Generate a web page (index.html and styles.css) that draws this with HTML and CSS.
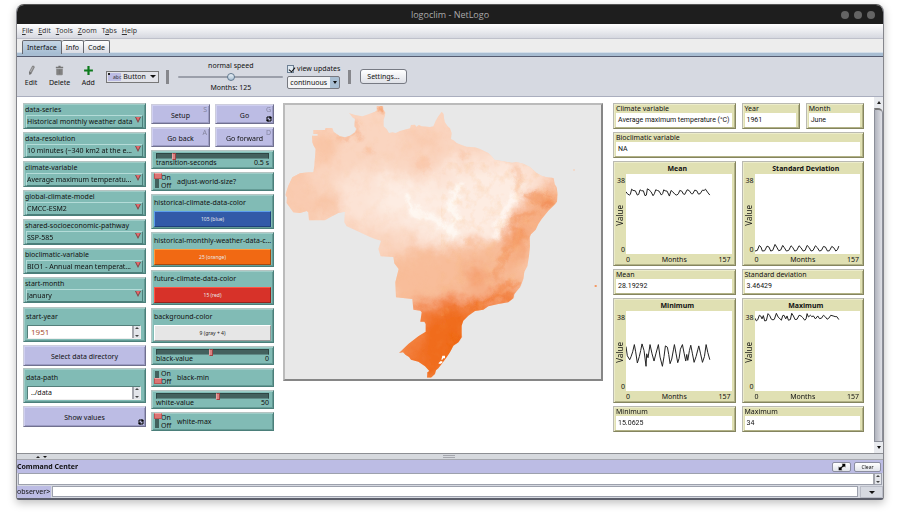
FILE: index.html
```html
<!DOCTYPE html>
<html lang="en">
<head>
<meta charset="utf-8">
<title>logoclim - NetLogo</title>
<link rel="stylesheet" href="styles.css">
</head>
<body>
<div class="window">
  <header class="titlebar">
    <span class="title">logoclim - NetLogo</span>
    <span class="dots"><i></i><i></i><i></i></span>
  </header>
  <nav class="menubar">
    <a href="#"><u>F</u>ile</a><a href="#"><u>E</u>dit</a><a href="#"><u>T</u>ools</a><a href="#"><u>Z</u>oom</a><a href="#">T<u>a</u>bs</a><a href="#"><u>H</u>elp</a>
  </nav>
  <div class="tabs">
    <button class="tab active">Interface</button><button class="tab">Info</button><button class="tab">Code</button>
  </div>
  <div class="toolbar">
    <button class="tool"><svg viewBox="0 0 30 30"><path d="M10 27 L8 19 L17 2 L22 2 L24 6 L15 23 Z" fill="#868686"/><path d="M12 19 L19 6" stroke="#c4c4c8" stroke-width="2"/><path d="M8 19 l7 3 l-5 5z" fill="#6c6c6c"/></svg>Edit</button>
    <button class="tool"><svg viewBox="0 0 30 30"><path d="M5 5 h7 v-3 h6 v3 h7 v4 h-20z" fill="#777"/><path d="M6 10 h18 v15 q0 3 -3 3 h-12 q-3 0 -3 -3z" fill="#8a8a8a"/><path d="M11 12 v13 M15 12 v13 M19 12 v13" stroke="#707070" stroke-width="2"/></svg>Delete</button>
    <button class="tool"><svg viewBox="0 0 30 30"><path d="M12 3 h6 v9 h9 v6 h-9 v9 h-6 v-9 h-9 v-6 h9z" fill="#0c7a1c"/></svg>Add</button>
    <button class="picker"><span class="abc"><b></b>abc</span>Button<i class="caret"></i></button>
    <i class="divider"></i>
    <div class="speed">
      <label for="speed">normal speed</label>
      <input id="speed" class="speed-range" type="range" min="0" max="100" value="50">
      <span>Months: 125</span>
    </div>
    <div class="updates">
      <label class="check"><input type="checkbox" checked>view updates</label>
      <select class="mode" aria-label="Update mode"><option>continuous</option></select>
    </div>
    <i class="divider second"></i>
    <button class="settings">Settings...</button>
  </div>

  <main class="workspace">
    <div class="canvas">
      <section class="col inputs">
        <div class="choosers">
          <label class="chooser teal">data-series<select><option>Historical monthly weather data</option></select></label>
          <label class="chooser teal">data-resolution<select><option>10 minutes (~340 km2 at the e...</option></select></label>
          <label class="chooser teal">climate-variable<select><option>Average maximum temperatu...</option></select></label>
          <label class="chooser teal">global-climate-model<select><option>CMCC-ESM2</option></select></label>
          <label class="chooser teal">shared-socioeconomic-pathway<select><option>SSP-585</option></select></label>
          <label class="chooser teal">bioclimatic-variable<select><option>BIO1 - Annual mean temperat...</option></select></label>
          <label class="chooser teal">start-month<select><option>January</option></select></label>
        </div>
        <label class="field teal">start-year<span class="entry"><input class="num" type="text" value="1951"><i class="spin"></i></span></label>
        <button class="action">Select data directory</button>
        <label class="field teal">data-path<span class="entry"><input type="text" value="../data"><i class="spin"></i></span></label>
        <button class="action">Show values<svg class="loop" viewBox="0 0 18 18"><path d="M3 9 V3 H12 M15 9 V15 H6" fill="none" stroke="#000" stroke-width="3"/><path d="M11 0 l6 3 v5 h-7z M7 18 l-6 -3 v-5 h7z"/></svg></button>
      </section>

      <section class="col controls">
        <div class="pair"><button class="action">Setup<kbd>S</kbd></button><button class="action">Go<kbd>G</kbd><svg class="loop" viewBox="0 0 18 18"><path d="M3 9 V3 H12 M15 9 V15 H6" fill="none" stroke="#000" stroke-width="3"/><path d="M11 0 l6 3 v5 h-7z M7 18 l-6 -3 v-5 h7z"/></svg></button></div>
        <div class="pair"><button class="action">Go back<kbd>A</kbd></button><button class="action">Go forward<kbd>D</kbd></button></div>
        <label class="slider teal"><input type="range" min="0" max="100" value="14"><span>transition-seconds</span><span>0.5 s</span></label>
        <label class="switch teal"><input type="checkbox" checked><span class="onoff"><span>On</span><span>Off</span></span>adjust-world-size?</label>
        <div class="color teal"><span>historical-climate-data-color</span><button class="blue">105 (blue)</button></div>
        <div class="color teal"><span>historical-monthly-weather-data-c...</span><button class="orange">25 (orange)</button></div>
        <div class="color teal"><span>future-climate-data-color</span><button class="red">15 (red)</button></div>
        <div class="color teal"><span>background-color</span><button class="gray">9 (gray + 4)</button></div>
        <label class="slider teal"><input type="range" min="0" max="100" value="49"><span>black-value</span><span>0</span></label>
        <label class="switch teal"><input type="checkbox"><span class="onoff"><span>On</span><span>Off</span></span>black-min</label>
        <label class="slider teal"><input type="range" min="0" max="100" value="55"><span>white-value</span><span>50</span></label>
        <label class="switch teal"><input type="checkbox" checked><span class="onoff"><span>On</span><span>Off</span></span>white-max</label>
      </section>

      <section class="view">
        <svg viewBox="30 28 948 822" role="img" aria-label="Map of maximum temperature in Brazil">
          <defs>
            <clipPath id="land"><path d="M305 31H323L325 42 331 50 330 60 326 72V92L335 100 342 112 352 110 362 112 375 106 405 98 408 88 420 87 424 93 432 88 440 92 465 94 475 92 482 75 490 62 500 48 506 55 507 68 510 80 518 92 525 98 530 112 528 130 538 135 545 142 560 148 575 153 600 155 615 160 640 172 650 182 658 192 680 196 710 201 725 199 745 204 765 214 785 232 800 240 815 245 836 247 839 265 845 275 848 295 846 318 835 330 820 345 800 370 790 385 782 402 768 416 764 425 765 450 762 480 757 512 748 528 745 550 735 575 718 595 715 608 700 620 670 625 640 632 625 642 600 646 580 660 565 675 560 690V725L550 740 535 750 525 770 515 785 500 805 490 818 483 824 480 835 468 846H456L457 830 463 826 450 812 430 798 408 792 402 784 392 778 384 770 372 772 400 745 430 722 452 708V685L448 678H436L440 650 436 645 415 642 412 610 363 605 361 560 371 520 358 503 355 484 317 482 310 460 318 435 300 430 280 422 245 405 215 392 208 380 210 348 190 352 160 368 150 374H102L100 350 95 346 75 352 55 350 48 340 35 322 36 305 31 298 40 270 52 245 75 233 100 230H115L118 210 122 160 116 150 112 140 111 120H128V115H115V103H150L152 97H172L176 108 185 115 195 122 210 125 225 120 240 110 244 100 238 92 240 70 232 65 222 52 240 58 262 62 280 56 300 48 306 44Z"/></clipPath>
            <filter id="soft" x="-50%" y="-50%" width="200%" height="200%"><feGaussianBlur stdDeviation="20" result="b"/><feTurbulence type="fractalNoise" baseFrequency="0.02" numOctaves="4" seed="4" result="t"/><feDisplacementMap in="b" in2="t" scale="60" xChannelSelector="R" yChannelSelector="G"/></filter>
            <filter id="fine" x="-50%" y="-50%" width="200%" height="200%"><feGaussianBlur stdDeviation="6" result="b"/><feTurbulence type="fractalNoise" baseFrequency="0.04" numOctaves="4" seed="9" result="t"/><feDisplacementMap in="b" in2="t" scale="36" xChannelSelector="R" yChannelSelector="G"/></filter>
            <filter id="grain" x="0" y="0" width="100%" height="100%"><feTurbulence type="fractalNoise" baseFrequency="0.035 0.03" numOctaves="4" seed="7"/><feColorMatrix values="0 0 0 0 0.96 0 0 0 0 0.5 0 0 0 0 0.22 2.4 0 0 0 -1.15"/></filter>
          </defs>
          <rect x="30" y="28" width="948" height="822" fill="#e8e8e8"/>
          <g clip-path="url(#land)">
            <rect x="20" y="20" width="840" height="840" fill="#fad5c0"/>
            <g filter="url(#soft)">
              <path d="M-20 180H110V420H-20Z" fill="#f9cbb0"/>
              <ellipse cx="145" cy="150" rx="40" ry="60" fill="#f9c5a6"/>
              <ellipse cx="150" cy="325" rx="45" ry="28" fill="#f8c2a2"/>
              <ellipse cx="440" cy="130" rx="60" ry="30" fill="#f9cbb0"/>
              <path d="M190 240L330 215 430 250 560 175 700 190 840 250 750 330 680 400 640 470 480 460 380 410 200 380Z" fill="#fce3d5"/>
              <path d="M300 270L400 240 500 290 560 230 720 215 740 290 700 350 660 430 560 410 500 440 400 370 320 340Z" fill="#fdece2"/>
              <path d="M330 480L550 450 680 430 780 400V620L560 700 340 650Z" fill="#f8bd9a"/>
              <path d="M790 270H880V400L770 440 680 560 690 390Z" fill="#f7b087"/>
              <path d="M400 640L480 610 640 600 740 570 720 650 600 690V860H360V690Z" fill="#f3803d"/>
              <path d="M450 690L500 650 590 640 590 760 470 880 420 800Z" fill="#f06c1a"/>
              <ellipse cx="610" cy="540" rx="40" ry="30" fill="#f49a66"/>
              <ellipse cx="720" cy="430" rx="28" ry="50" fill="#f59f6d"/>
            </g>
            <g filter="url(#fine)">
              <path d="M390 290L420 350 450 360 480 370 530 410 545 360 520 330 545 290 555 260" fill="none" stroke="#fffdfb" stroke-width="18" opacity=".75"/>
              <path d="M730 290L700 330 680 370 660 430" fill="none" stroke="#fffaf6" stroke-width="22" opacity=".8"/>
              <path d="M725 210L730 260 728 295" fill="none" stroke="#f7b48c" stroke-width="7"/>
              <path d="M740 300L800 300 835 310 M770 320L840 325 M710 370L750 360 790 350" fill="none" stroke="#f3965f" stroke-width="14" opacity=".8"/>
              <path d="M710 380L735 430 705 460 670 510 665 550 M730 400L755 430 M690 450V500" fill="none" stroke="#f4935a" stroke-width="10" opacity=".8"/>
              <path d="M540 650L610 625 660 605 720 600 M590 640L640 610" fill="none" stroke="#f0742a" stroke-width="9"/>
              <path d="M670 580L700 560 735 570" fill="none" stroke="#f38544" stroke-width="8"/>
              <path d="M560 430L600 450 570 490 M590 420V450" fill="none" stroke="#f9c09f" stroke-width="8"/>
              <path d="M195 130L230 115 250 100 M245 110L260 125 M235 70L245 92" fill="none" stroke="#f6a77c" stroke-width="7"/>
              <path d="M312 30L325 50" stroke="#f49a66" stroke-width="18"/>
              <path d="M530 720L560 740 520 760" fill="none" stroke="#ed6512" stroke-width="10"/>
              <ellipse cx="285" cy="165" rx="14" ry="10" fill="#f9c2a2"/><ellipse cx="565" cy="178" rx="9" ry="7" fill="#f9c2a2"/>
              <ellipse cx="445" cy="205" rx="24" ry="18" fill="#f9c9ae"/><ellipse cx="820" cy="322" rx="18" ry="12" fill="#f2905a"/>
            </g>
            <rect x="500" y="200" width="360" height="460" filter="url(#grain)" opacity=".2"/>
            <rect x="20" y="20" width="840" height="840" filter="url(#grain)" opacity=".1"/>
          </g>
          <path d="M502 780h8v8h-5l-3 4h-3zM491 802l5-5h6v4l-5 3h-6z" fill="#fff"/>
          <path d="M895 221h4v4h-4z" fill="#f9cbb0"/><path d="M959 568h6v6h-6z" fill="#f59a64"/>
        </svg>
      </section>

      <section class="monitors">
        <div class="monitor wide2"><span>Climate variable</span><output>Average maximum temperature (°C)</output></div>
        <div class="monitor"><span>Year</span><output>1961</output></div>
        <div class="monitor"><span>Month</span><output>June</output></div>
        <div class="monitor wide4"><span>Bioclimatic variable</span><output>NA</output></div>
        <figure class="plot wide2">
          <figcaption>Mean</figcaption>
          <div class="yaxis"><span>38</span><b>Value</b><span>0</span></div>
          <svg viewBox="0 0 316 243" preserveAspectRatio="none"><polyline points="0,54 4,60 10,64 13,62 17,46 21,50 28,51 34,64 38,62 42,48 47,51 52,51 57,66 61,64 64,45 69,48 75,54 81,66 85,60 89,48 94,50 99,52 106,64 110,59 113,48 117,51 123,52 130,67 135,50 140,54 147,62 152,64 157,60 161,50 167,52 172,61 176,62 183,48 189,50 196,60 200,60 206,49 212,51 217,61 222,60 229,49 234,50 238,46 244,55 251,64"/></svg>
          <div class="xaxis"><span>0</span><b>Months</b><span>157</span></div>
        </figure>
        <figure class="plot wide2">
          <figcaption>Standard Deviation</figcaption>
          <div class="yaxis"><span>38</span><b>Value</b><span>0</span></div>
          <svg viewBox="0 0 316 243" preserveAspectRatio="none"><polyline points="0,234 7,232 13,217 18,222 22,234 29,233 36,219 42,222 47,234 53,232 60,214 65,222 71,233 77,231 83,217 88,224 94,234 101,232 108,218 113,223 119,234 125,232 132,218 138,224 144,234 150,232 156,217 162,223 168,234 174,232 181,218 187,224 193,234 199,232 205,220 211,222 217,234 223,233 230,220 236,224 242,234 247,230 251,219"/></svg>
          <div class="xaxis"><span>0</span><b>Months</b><span>157</span></div>
        </figure>
        <div class="monitor wide2"><span>Mean</span><output>28.19292</output></div>
        <div class="monitor wide2"><span>Standard deviation</span><output>3.46429</output></div>
        <figure class="plot wide2">
          <figcaption>Minimum</figcaption>
          <div class="yaxis"><span>38</span><b>Value</b><span>0</span></div>
          <svg viewBox="0 0 316 243" preserveAspectRatio="none"><polyline points="0,108 4,136 11,148 15,139 20,124 25,102 29,124 34,158 40,138 44,120 48,100 54,120 60,168 62,130 66,142 72,102 78,130 84,152 90,128 97,102 102,140 109,168 114,138 118,106 124,110 128,132 132,160 137,146 142,118 145,102 150,130 155,157 159,144 163,116 169,102 174,128 179,152 182,132 185,150 190,120 194,104 199,130 204,156 210,138 215,118 218,106 223,128 229,156 235,138 240,102 245,126 251,148"/></svg>
          <div class="xaxis"><span>0</span><b>Months</b><span>157</span></div>
        </figure>
        <figure class="plot wide2">
          <figcaption>Maximum</figcaption>
          <div class="yaxis"><span>38</span><b>Value</b><span>0</span></div>
          <svg viewBox="0 0 316 243" preserveAspectRatio="none"><polyline points="0,22 4,30 8,27 13,13 17,15 21,24 25,14 29,30 34,29 39,8 44,14 49,25 54,27 58,25 64,7 69,18 75,24 79,28 83,14 87,13 92,24 96,15 100,28 106,26 110,7 115,15 120,26 126,25 132,13 138,15 143,20 149,28 153,24 156,8 160,18 166,13 170,17 175,15 181,24 188,15 193,23 199,22 205,13 211,18 216,25 221,22 227,13 234,15 240,17 245,17 251,26"/></svg>
          <div class="xaxis"><span>0</span><b>Months</b><span>157</span></div>
        </figure>
        <div class="monitor wide2"><span>Minimum</span><output>15.0625</output></div>
        <div class="monitor wide2"><span>Maximum</span><output>34</output></div>
      </section>
    </div>
    <div class="scrollbar"><i class="up"></i><i class="track"></i><i class="down"></i></div>
  </main>

  <div class="splitter"><i class="up"></i><i class="down"></i><b></b></div>
  <section class="command">
    <header><h2>Command Center</h2>
      <button aria-label="Toggle layout"><svg viewBox="0 0 24 18"><path d="M11 1h9v9l-3-3-3 3-3-3 3-3zM13 17H4V8l3 3 3-3 3 3-3 3z"/></svg></button><button class="clear">Clear</button>
    </header>
    <div class="history"><i class="spin"></i></div>
    <div class="prompt"><label for="cmd">observer&gt;</label><input id="cmd" type="text"><button aria-label="History"><i class="down"></i></button></div>
  </section>
</div>
</body>
</html>
```

FILE: styles.css
```css
* { box-sizing: border-box; }
body {
  margin: 0;
  min-height: 100vh;
  padding: 4px 16px 18px;
  display: flex;
  background: #fff;
  font: 7px/10px "Noto Sans", sans-serif;
  color: #111;
}
button, input, select { font: inherit; color: inherit; margin: 0; padding: 0; border-radius: 0; }
button { white-space: nowrap; }
i { display: block; }
.window {
  flex: 1;
  min-width: 0;
  display: flex;
  flex-direction: column;
  border: 1px solid #85868c;
  border-top-color: #555;
  border-bottom: 2px solid #5c5f6b;
  border-radius: 8px 8px 3px 3px;
  box-shadow: 0 3px 8px rgba(0, 0, 0, .25);
  overflow: hidden;
}
.titlebar {
  height: 19px;
  background: #1e1e1e;
  color: #aaa;
  display: grid;
  grid-template-columns: 1fr auto 1fr;
  align-items: center;
  font-family: "Open Sans", sans-serif;
  font-size: 9px;
}
.title { grid-column: 2; }
.dots { display: flex; gap: 5px; justify-self: end; padding-right: 8px; }
.dots i { width: 8px; height: 8px; border-radius: 50%; background: #646464; }
.menubar {
  height: 15px;
  display: flex;
  gap: 5px;
  padding: 0 5px;
  align-items: center;
  background: linear-gradient(#fff, #d6d8e0);
  border-bottom: 1px solid #bfc1cb;
}
.menubar a { color: #333; text-decoration: none; }
.tabs {
  height: 18px;
  display: flex;
  align-items: flex-start;
  padding: 1px 5px 0;
  background: linear-gradient(#ededed 13px, #fff 13px, #a8bdd2 14px);
  border-bottom: 1px solid #555b70;
}
.tab {
  height: 13px;
  padding: 1px 4px 0;
  border: 1px solid #66686f;
  border-left-width: 0;
  border-bottom: 0;
  border-radius: 2px 2px 0 0;
  background: linear-gradient(#fff, #d9dbe3);
}
.tab.active { border-left-width: 1px; background: linear-gradient(#c5d5e4, #a5bcd2); height: 14px; }
.toolbar {
  height: 40px;
  display: flex;
  align-items: center;
  background: #d6d9e1;
  border-bottom: 1px solid #aaaebe;
  padding-left: 6px;
}
.tool { background: none; border: 0; display: flex; flex-direction: column; align-items: center; gap: 1px; margin-right: 10px; min-width: 16px; line-height: 12px; }
.tool svg { width: 11px; height: 11px; }
.picker {
  width: 53px;
  height: 12px;
  display: flex;
  align-items: center;
  gap: 2px;
  border: 1px solid #777;
  background: #e2e3e9;
  padding: 0 2px 0 1px;
}
.abc { width: 13px; background: #bcbce4; font-size: 5px; line-height: 8px; text-align: right; position: relative; color: #333; }
.abc b { position: absolute; left: 0; top: 0; border: 1px solid #222; }
.caret { margin-left: auto; }
.caret, .down { border: 2px solid transparent; border-top: 3px solid #111; border-bottom: 0; }
.picker .caret { border-width: 3px 3px 0; }
.up { border: 2px solid transparent; border-bottom: 3px solid #222; border-top: 0; }
.divider { width: 3px; height: 14px; background: #86878c; margin: 0 9px 0 7px; }
.divider.second { margin: 0 9px 0 8px; }
.speed { width: 105px; text-align: center; display: flex; flex-direction: column; margin-right: 4px; gap: 1px; }
.speed-range { appearance: none; width: 100%; height: 10px; background: none; }
.speed-range::-webkit-slider-runnable-track { height: 2px; background: #9b9faa; border-radius: 1px; }
.speed-range::-webkit-slider-thumb { appearance: none; width: 8px; height: 8px; margin-top: -3px; border-radius: 50%; border: 1px solid #61798f; background: linear-gradient(#eaf1f7, #a8bfd3); }
.updates { display: flex; flex-direction: column; gap: 2px; width: 53px; position: relative; }
.check { display: flex; align-items: center; gap: 3px; white-space: nowrap; }
.check input { appearance: none; width: 8px; height: 8px; border: 1px solid #6c7f93; background: #dfe8f0; position: relative; }
.check input:checked::after { content: ""; position: absolute; left: 2px; top: 0; width: 3px; height: 5px; border: solid #111; border-width: 0 1px 1px 0; transform: rotate(40deg); }
.mode {
  appearance: none;
  height: 13px;
  padding-left: 2px;
  border: 1px solid #76787f;
  border-radius: 2px;
  background: linear-gradient(90deg, #f3f4f6 42px, #a9bfd3 42px);
}
.updates::after { content: ""; position: absolute; right: 3px; bottom: 5px; border: 2px solid transparent; border-top: 3px solid #111; border-bottom: 0; pointer-events: none; }
.settings { height: 15px; padding: 0 6px; border: 1px solid #777a83; border-radius: 3px; background: linear-gradient(#fff, #dfe1e7); }

.workspace { flex: 1; display: flex; background: #fff; }
.canvas { flex: 1; min-width: 0; display: flex; align-items: flex-start; padding: 6px 10px 6px 6px; }
.col { flex: 123 1 0; min-width: 0; display: flex; flex-direction: column; gap: 3px; }
.controls { margin: 1px 9px 0 5px; }
.teal { background: #81bbb5; border: 1px solid; border-color: #b5c4c2 #4b7f7a #4b7f7a #b5c4c2; box-shadow: inset 1px 1px #9fcdc8, inset -1px -1px #649b95; }
.choosers { display: flex; flex-direction: column; gap: 3px; margin-bottom: 1px; }
.chooser { height: 26px; padding: 1px 2px 1px 1px; display: flex; flex-direction: column; white-space: nowrap; position: relative; }
.chooser select {
  appearance: none;
  height: 13px;
  line-height: 11px;
  margin-left: 1px;
  border: 1px solid;
  border-color: #b4dcd8 #4b7f7a #4b7f7a #b4dcd8;
  background: none;
}
.chooser::before { content: ""; position: absolute; right: 4px; bottom: 5px; border: 3px solid transparent; border-top: 6px solid #7c4444; border-bottom: 0; }
.chooser::after { content: ""; position: absolute; right: 5px; bottom: 7px; border: 2px solid transparent; border-top: 4px solid #e4696c; border-bottom: 0; }
.field { height: 35px; padding: 4px 3px 2px 2px; display: flex; flex-direction: column; justify-content: space-between; }
.entry { display: flex; height: 14px; margin: 0 1px; background: #fff; border: 1px solid; border-color: #547f7b #eee #eee #547f7b; }
.entry input { flex: 1; min-width: 0; border: 0; background: none; padding-left: 3px; }
.entry .num { color: #a3431d; font-family: "Open Sans", sans-serif; font-size: 8px; }
.spin { width: 8px; background: #e3e5ea; position: relative; border-left: 2px solid #a4a6ad; }
.spin::before, .spin::after { content: ""; position: absolute; left: 1px; border: 2px solid transparent; }
.spin::before { top: 1px; border-top: 0; border-bottom-color: #444; }
.spin::after { bottom: 1px; border-bottom: 0; border-top-color: #444; }
.action {
  height: 20px;
  position: relative;
  padding-top: 3px;
  background: #bcbce4;
  border: 1px solid;
  border-color: #cdcddc #70708f #70708f #cdcddc;
  box-shadow: inset 1px 1px #cfcff0, inset -1px -1px #9c9cc4;
}
.inputs .action { height: 21px; margin-bottom: -1px; }
.pair { display: grid; grid-template-columns: 1fr 1fr; gap: 5px; }
.action kbd { position: absolute; right: 2px; top: 0; font: 7px/10px "Noto Sans", sans-serif; color: #85859f; }
.loop { position: absolute; right: 1px; bottom: 1px; width: 6px; height: 6px; }
.slider { height: 19px; padding: 1px 4px 0; display: grid; grid-template-columns: 1fr auto; line-height: 8px; align-content: start; }
.slider input { appearance: none; grid-column: 1 / 3; width: 100%; height: 7px; background: none; }
.slider input::-webkit-slider-runnable-track { height: 6px; background: #43615e; border: 1px solid #2f4644; border-bottom-color: #5f8a86; }
.slider input::-webkit-slider-thumb { appearance: none; width: 4px; height: 7px; margin-top: -1px; background: #d98080; border: 1px solid #9c4646; border-left-color: #eba6a6; }
.switch { height: 19px; display: flex; align-items: center; padding-left: 2px; }
.onoff { width: 17px; display: flex; flex-direction: column; line-height: 8px; padding-left: 1px; }
.switch input { appearance: none; width: 6px; height: 13px; background: linear-gradient(#43615e, #43615e) center / 4px 100% no-repeat; position: relative; }
.switch input::after { content: ""; position: absolute; left: 0; bottom: 0; width: 6px; height: 4px; background: #dc7474; border: 1px solid #b95555; border-top-color: #f0a4a4; }
.switch input:checked::after { bottom: 9px; }
.color { height: 35px; padding: 3px 2px 1px; display: flex; flex-direction: column; justify-content: space-between; white-space: nowrap; }
.color button { height: 16px; font-size: 5px; line-height: 8px; border: 1px solid; color: #e8e8e8; }
.color .blue { background: #325aa8; border-color: #5b9dee #20407c #20407c #5b9dee; }
.color .orange { background: #f16913; border-color: #ff9b3d #a6490d #a6490d #ff9b3d; }
.color .red { background: #d73229; border-color: #ff5544 #96231d #96231d #ff5544; }
.color .gray { background: #e6e6e6; border-color: #fff #999 #999 #fff; color: #222; }

.view { flex: 316 1 0; min-width: 0; display: flex; border: 2px solid; border-color: #bbb #868686 #868686 #bbb; }
.view svg { width: 100%; display: block; }

.monitors { flex: 251 1 0; min-width: 0; margin-left: 10px; display: grid; grid-template-columns: repeat(4, 1fr); gap: 3px 6px; }
.wide2 { grid-column: span 2; }
.wide4 { grid-column: span 4; }
.monitor, .plot { background: #e0e0b3; border: 1px solid; border-color: #babab2 #85855f #85855f #babab2; box-shadow: inset 1px 1px #ececca, inset -1px -1px #b2b286; min-width: 0; }
.monitor { height: 26px; padding: 0 3px 2px 2px; display: flex; flex-direction: column; line-height: 9px; white-space: nowrap; }
.monitor output { flex: 1; background: #fff; padding-left: 2px; line-height: 14px; font-family: Roboto, sans-serif; }
.plot { margin: 0; height: 105px; padding-right: 3px; display: grid; grid-template: 12px 1fr 11px / 12px 1fr; }
.plot figcaption { grid-column: 1 / 3; text-align: center; font-weight: bold; line-height: 13px; padding-left: 9px; }
.plot svg { width: 100%; height: 100%; background: #fff; min-height: 0; }
.plot polyline { fill: none; stroke: #222; stroke-width: 1px; vector-effect: non-scaling-stroke; }
.plot b { font-weight: normal; }
.yaxis { display: flex; flex-direction: column; align-items: flex-end; justify-content: space-between; padding-top: 3px; padding-right: 1px; line-height: 8px; }
.yaxis b { writing-mode: vertical-rl; transform: rotate(180deg); line-height: 11px; font-size: 8px; }
.xaxis { grid-column: 2; display: flex; justify-content: space-between; padding-right: 1px; line-height: 12px; }

.scrollbar { width: 9px; display: flex; flex-direction: column; align-items: center; background: #e8eaee; }
.scrollbar .up { margin: 4px 0; }
.scrollbar .track { flex: 1; width: 9px; border: 1px solid #8c8f99; border-top: 2px solid #777; border-radius: 0 5px 0 0; background: linear-gradient(90deg, #b1b4be, #dfe0e6); }
.scrollbar .down { margin: 4px 0; }

.splitter { height: 7px; background: #d6d9de; border-top: 1px solid #8d8f94; border-bottom: 1px solid #a6a8ae; display: grid; grid-template-columns: 16px 4px 4px 1fr 27px; align-items: center; gap: 0 3px; padding-right: 6px; }
.splitter .up { grid-column: 2; border-bottom-width: 2px; }
.splitter .down { border-top-width: 2px; }
.splitter b { width: 12px; height: 3px; border: solid #a5a7ae; border-width: 1px 0; margin: 0 auto; }
.command { background: #d6d9e1; }
.command header { height: 13px; display: flex; align-items: center; gap: 3px; background: #bcbce4; padding-right: 2px; }
.command h2 { flex: 1; margin: 0; font-size: 7px; }
.command header button { width: 19px; height: 10px; display: grid; place-items: center; border: 1px solid #8b8da0; border-radius: 2px; background: linear-gradient(#fff, #e1e3ea); }
.command header svg { width: 10px; height: 8px; }
.command header .clear { width: 27px; font-size: 5px; line-height: 8px; }
.history { height: 12px; margin: 0 1px; background: #fff; border: 1px solid #9da1ad; display: flex; justify-content: flex-end; }
.prompt { display: flex; height: 12px; margin-top: 1px; }
.prompt label { background: #bcbce4; width: 34px; line-height: 11px; }
.prompt input { flex: 1; min-width: 0; border: 1px solid #9da1ad; background: #fff; margin: 0 2px 1px 1px; }
.prompt button { width: 23px; display: grid; place-items: center; border: 1px solid #b9bcc7; background: #d6d9e1; }
.prompt .down { border-width: 3px 3px 0; }
```
